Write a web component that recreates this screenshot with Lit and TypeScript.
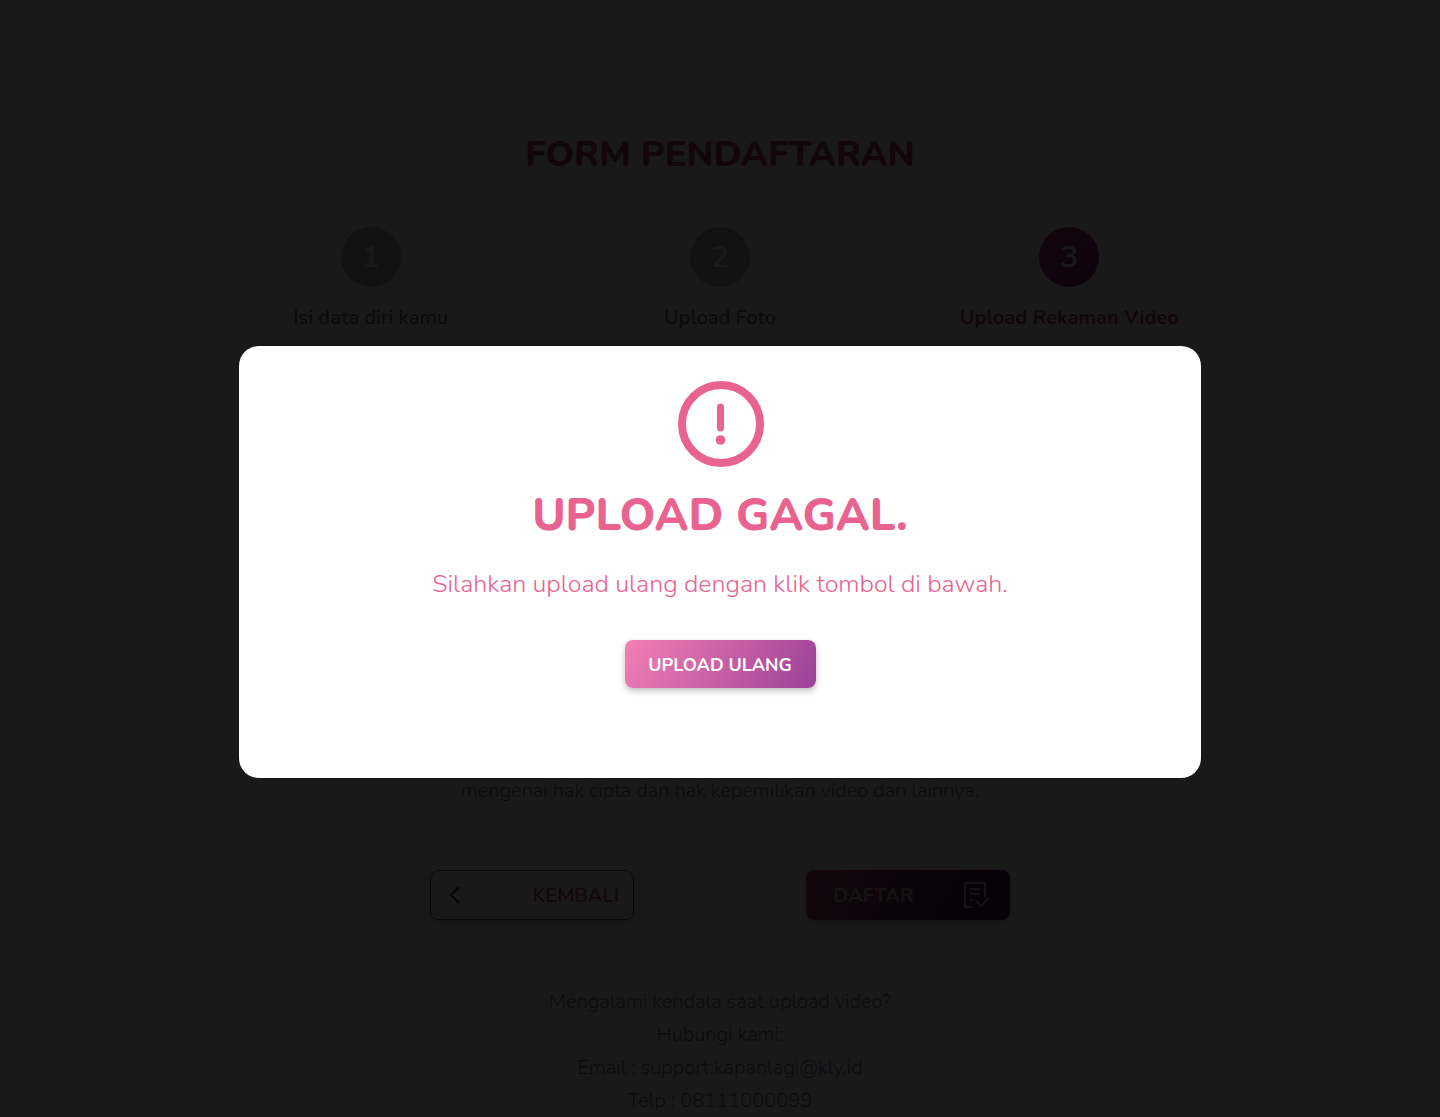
import { LitElement, html, css } from "lit";
import { customElement } from "lit/decorators.js";
import { classMap } from "lit/directives/class-map.js";

const steps = [
  { number: 1, label: "Isi data diri kamu", active: false },
  { number: 2, label: "Upload Foto", active: false },
  { number: 3, label: "Upload Rekaman Video", active: true },
];

@customElement("app-root")
export class AppRoot extends LitElement {
  static styles = css`
    :host {
      display: block;
      min-height: 100vh;
      background: #fff;
      color: #707070;
      font-family: Nunito, Lato, "Open Sans", sans-serif;
      font-size: 20px;
      line-height: 33px;
      font-weight: 350;
      text-align: center;
    }
    * {
      box-sizing: border-box;
    }
    h1,
    h2,
    p,
    ol {
      margin: 0;
      padding: 0;
    }
    .page {
      display: flex;
      flex-direction: column;
      align-items: center;
      padding-top: 130px;
    }
    .title {
      color: #b04468;
      font-size: 36px;
      line-height: 50px;
      font-weight: 800;
    }
    .steps {
      display: grid;
      grid-template-columns: repeat(3, 1fr);
      width: 100%;
      max-width: 1048px;
      margin-top: 47px;
      list-style: none;
    }
    .step {
      display: flex;
      flex-direction: column;
      align-items: center;
      gap: 14px;
      font-weight: 600;
    }
    .dot {
      width: 60px;
      height: 60px;
      border-radius: 50%;
      background: #b3b3b3;
      color: #fff;
      font-size: 30px;
      line-height: 62px;
    }
    .active {
      color: #b04468;
      font-weight: 700;
    }
    .active .dot {
      background: linear-gradient(135deg, #c03a70, #802a80);
      font-weight: 600;
    }
    .terms {
      margin-top: 440px;
    }
    .actions {
      display: flex;
      justify-content: space-between;
      width: 100%;
      max-width: 580px;
      margin-top: 63px;
    }
    .action {
      display: flex;
      align-items: center;
      justify-content: space-between;
      width: 204px;
      height: 50px;
      padding: 0 14px;
      border: 0;
      border-radius: 8px;
      font: inherit;
      font-weight: 600;
      box-shadow: 0 2px 5px rgba(0, 0, 0, 0.25);
    }
    .back {
      background: #fff;
      border: 1px solid #606060;
      color: #b04468;
    }
    .submit {
      padding: 0 20px 0 27px;
      color: #c8b8c4;
      font-weight: 700;
      background: linear-gradient(120deg, #b04a70, #601060 80%);
    }
    .chevron {
      width: 20px;
      height: 20px;
    }
    .document {
      width: 28px;
      height: 28px;
    }
    .help {
      margin-top: 65px;
    }
    .help a {
      color: inherit;
      text-decoration: none;
    }
    .overlay {
      position: fixed;
      inset: 0;
      display: grid;
      place-items: center;
      padding-top: 7px;
      background: rgba(0, 0, 0, 0.9);
    }
    .dialog {
      display: flex;
      flex-direction: column;
      align-items: center;
      width: calc(100% - 48px);
      max-width: 962px;
      padding: 34px 24px 90px;
      border-radius: 20px;
      background: #fff;
      color: #e8638f;
    }
    .alert {
      width: 88px;
      height: 88px;
    }
    .heading {
      margin-top: 18px;
      font-size: 45px;
      line-height: 60px;
      font-weight: 800;
    }
    .message {
      margin-top: 20px;
      font-size: 25px;
      line-height: 36px;
    }
    .retry {
      margin-top: 38px;
      width: 191px;
      height: 48px;
      padding: 2px 0 0;
      border: 0;
      border-radius: 8px;
      color: #fff;
      font: inherit;
      font-size: 18px;
      font-weight: 700;
      background: linear-gradient(120deg, #f47fb3, #9b4199);
      box-shadow: 0 3px 6px rgba(0, 0, 0, 0.25);
    }
  `;

  render() {
    return html`
      <main class="page">
        <h1 class="title">FORM PENDAFTARAN</h1>
        <ol class="steps">
          ${steps.map(
            (step) => html`
              <li class=${classMap({ step: true, active: step.active })}>
                <span class="dot">${step.number}</span>
                <span>${step.label}</span>
              </li>
            `,
          )}
        </ol>
        <p class="terms">mengenai hak cipta dan hak kepemilikan video dan lainnya.</p>
        <div class="actions">
          <button class="action back" type="button">
            <svg class="chevron" viewBox="0 0 20 20" fill="none" stroke="#704860" stroke-width="2.5" aria-hidden="true">
              <path d="M14 2 6 10l8 8" />
            </svg>
            KEMBALI
          </button>
          <button class="action submit" type="button">
            DAFTAR
            <svg class="document" viewBox="0 0 28 28" fill="none" stroke="currentColor" stroke-width="2" aria-hidden="true">
              <path d="M10 26H3V2h20v15M8 8h10M8 13h10M8 19h3M14 20l5 5 8-8" />
            </svg>
          </button>
        </div>
        <div class="help">
          <p>Mengalami kendala saat upload video?</p>
          <p>Hubungi kami:</p>
          <p>Email : <a href="mailto:support.kapanlagi@kly.id">support.kapanlagi@kly.id</a></p>
          <p>Telp : <a href="tel:08111000099">08111000099</a></p>
        </div>
      </main>
      <div class="overlay">
        <section class="dialog" role="alertdialog" aria-modal="true" aria-labelledby="heading" aria-describedby="message">
          <svg class="alert" viewBox="0 0 88 88" fill="none" stroke="currentColor" aria-hidden="true">
            <circle cx="45" cy="44" r="39" stroke-width="8" />
            <path d="M44.5 27v21" stroke-width="7" stroke-linecap="round" />
            <circle cx="44.5" cy="60" r="4.8" fill="currentColor" stroke="none" />
          </svg>
          <h2 class="heading" id="heading">UPLOAD GAGAL.</h2>
          <p class="message" id="message">Silahkan upload ulang dengan klik tombol di bawah.</p>
          <button class="retry" type="button">UPLOAD ULANG</button>
        </section>
      </div>
    `;
  }
}
